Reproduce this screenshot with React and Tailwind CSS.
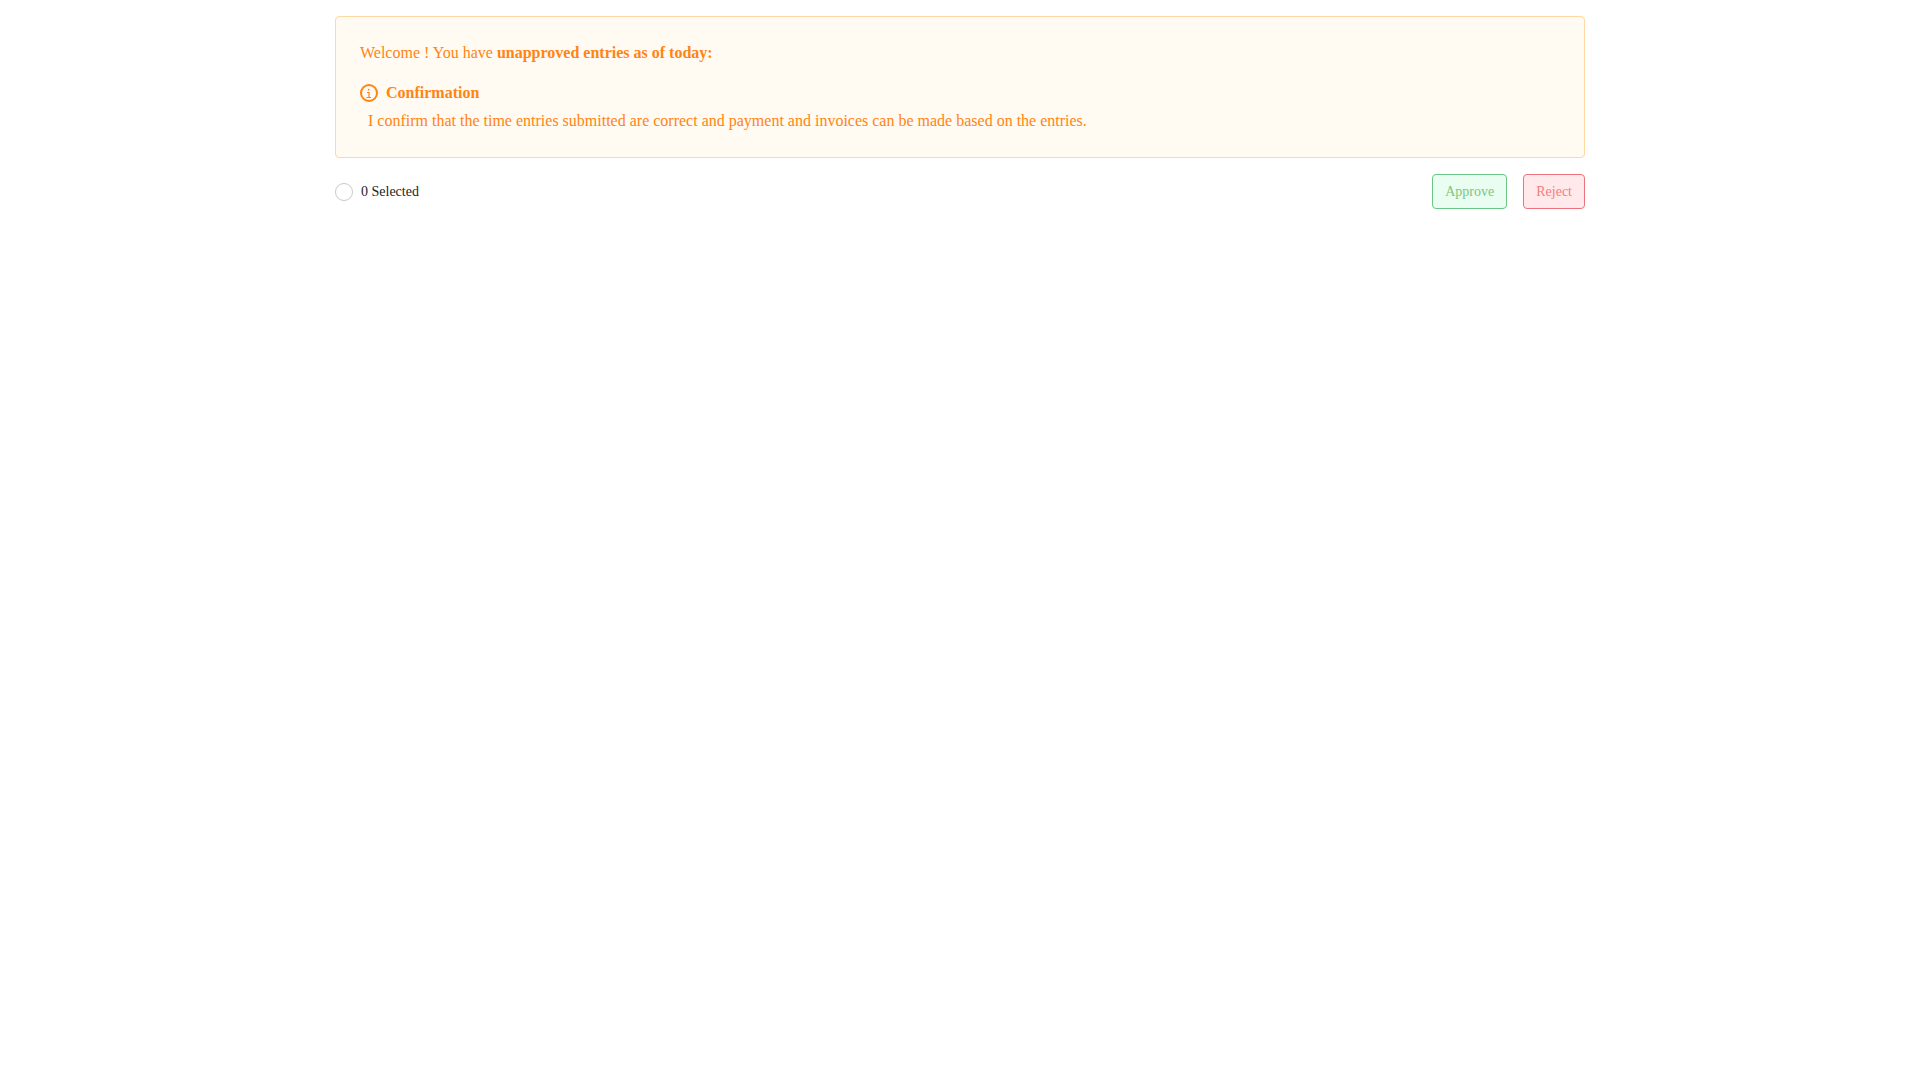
import { useState } from "react";

export default function App() {
    const [allSelected, setAllSelected] = useState(false);

    return (
        <main className="mx-auto max-w-[1250px] pt-4 font-['Liberation_Serif',serif]">
            <section className="rounded border border-[#ffd8a3] bg-[#fffaf2] p-6 text-base text-[#ff8412]">
                <p>
                    Welcome ! You have <b>unapproved entries as of today:</b>
                </p>
                <div className="mt-4 flex items-center gap-2">
                    <svg width="18" height="18" viewBox="0 0 18 18" fill="none" stroke="currentColor" aria-hidden="true">
                        <circle cx="9" cy="9" r="8" strokeWidth="2" />
                        <path d="M7 8.5h2v5M6.5 13.5h4.5" strokeWidth="1.2" />
                        <circle cx="8.7" cy="5.7" r="0.9" fill="currentColor" stroke="none" />
                    </svg>
                    <h2 className="font-bold">Confirmation</h2>
                </div>
                <p className="mt-1 px-2">
                    I confirm that the time entries submitted are correct and payment and invoices can be made based on the entries.
                </p>
            </section>

            <div className="mt-4 flex items-center justify-between text-sm">
                <label className="flex items-center gap-2 text-[#212529]">
                    <input
                        type="checkbox"
                        checked={allSelected}
                        onChange={(e) => setAllSelected(e.target.checked)}
                        className="size-[18px] appearance-none rounded-full border border-[#c8c8c8] bg-white checked:bg-[#ff8412]"
                    />
                    0 Selected
                </label>
                <div className="flex gap-4">
                    <button className="h-[35px] rounded border border-[#6cc486] bg-[#e9fdf1] px-3 text-[#7cc67e]">
                        Approve
                    </button>
                    <button className="h-[35px] rounded border border-[#ee727c] bg-[#ffe9ea] px-3 text-[#f47c80]">
                        Reject
                    </button>
                </div>
            </div>
        </main>
    );
}
